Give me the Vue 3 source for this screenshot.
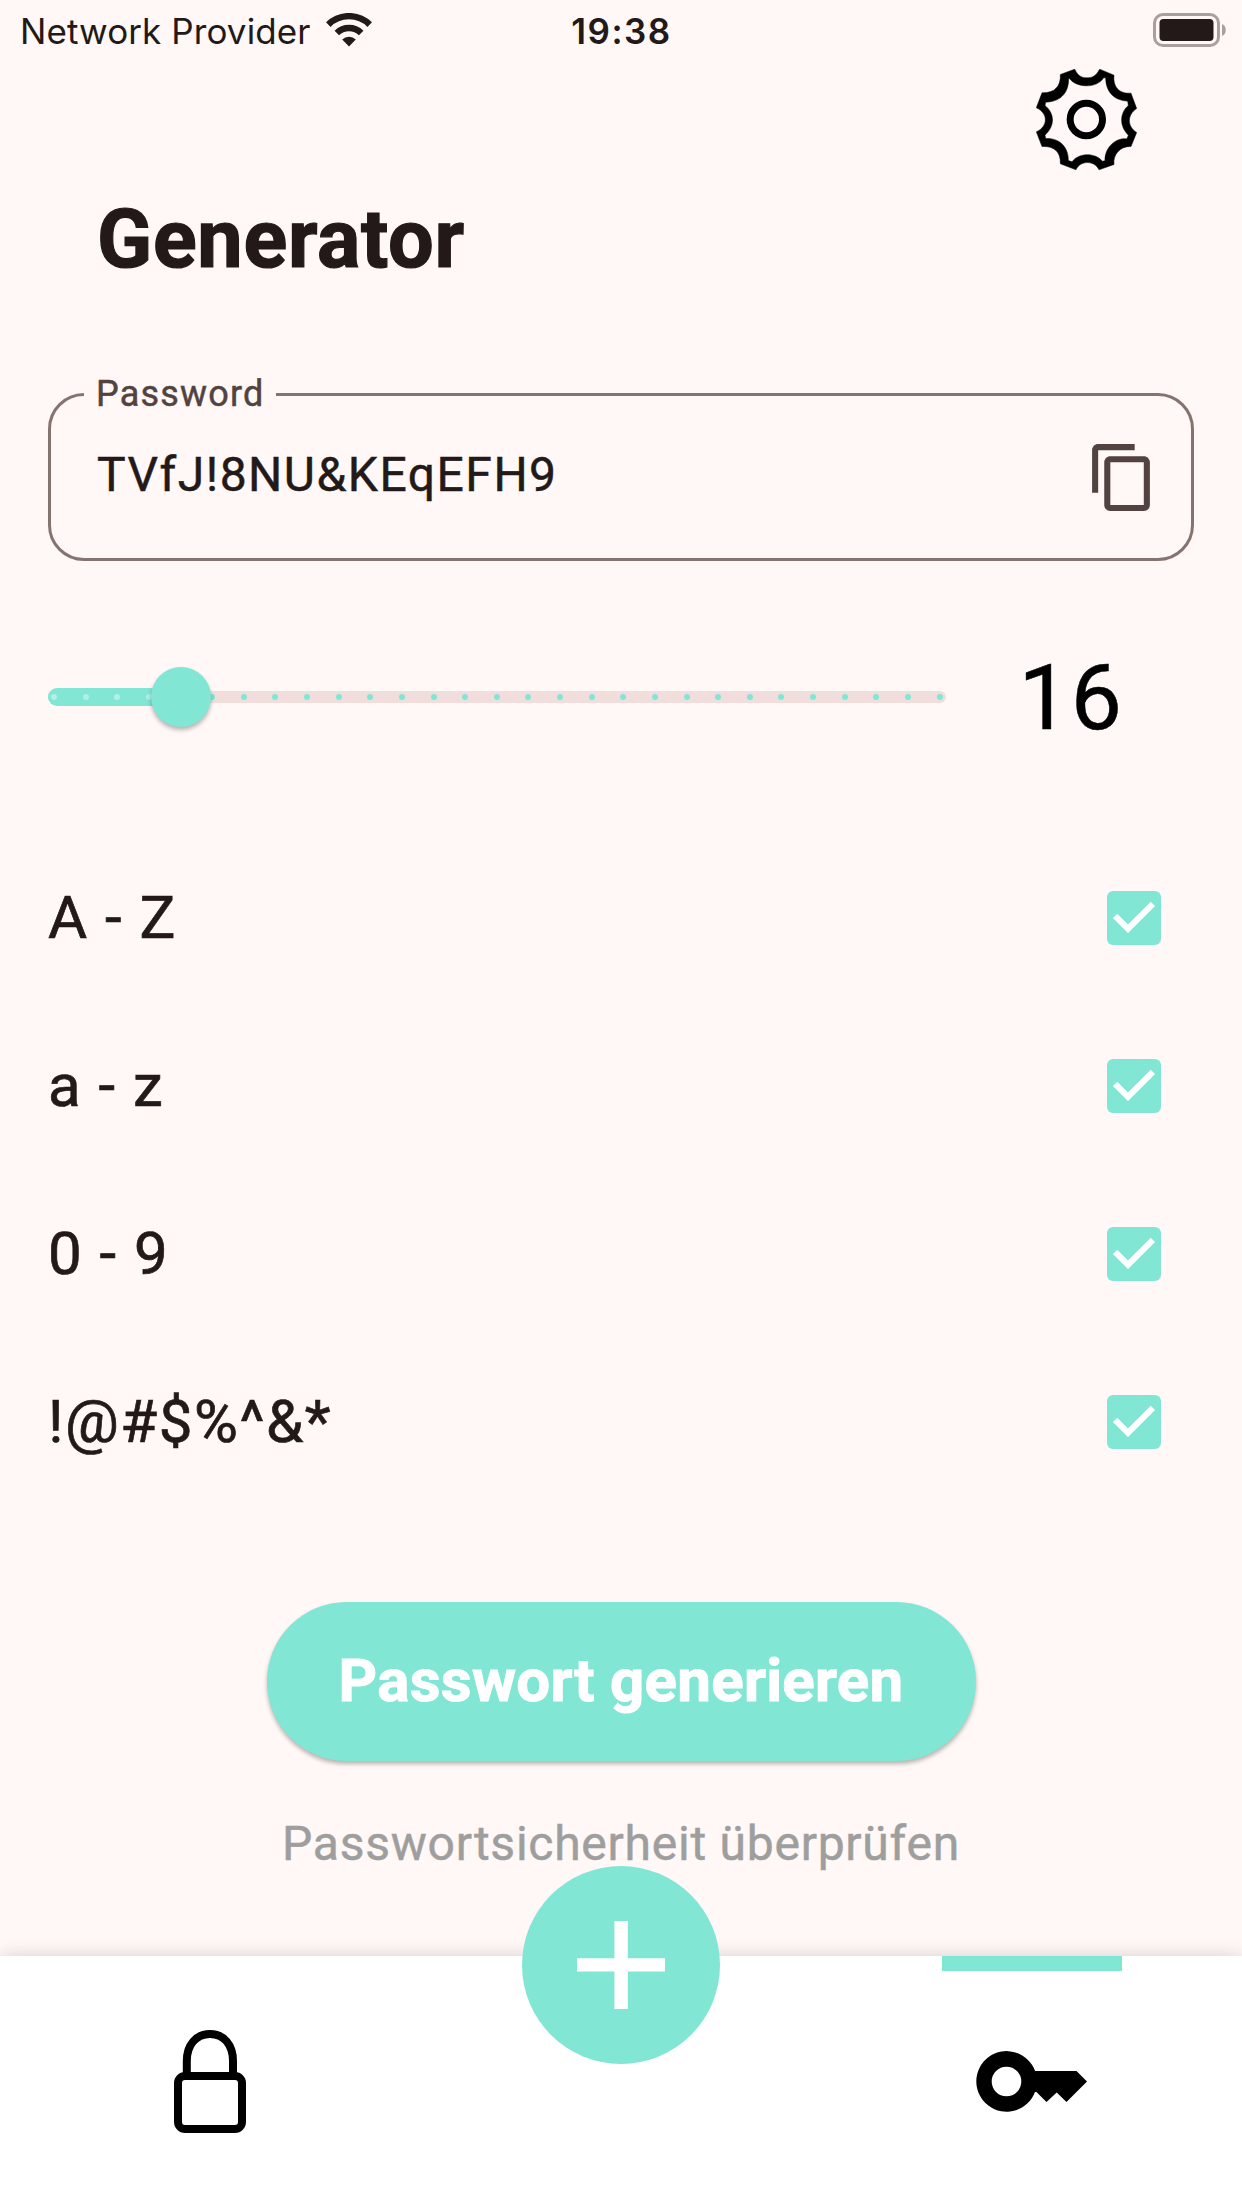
<script setup>
import { ref, computed } from 'vue'

const password = ref('TVfJ!8NU&KEqEFH9')
const minLength = 12
const maxLength = 40
const length = ref(16)

const steps = computed(() =>
  Array.from({ length: maxLength - minLength + 1 }, (_, i) => minLength + i)
)
const thumbX = computed(
  () => 6 + ((length.value - minLength) / (maxLength - minLength)) * 885.5
)

const options = ref([
  { label: 'A - Z', checked: true },
  { label: 'a - z', checked: true },
  { label: '0 - 9', checked: true },
  { label: '!@#$%^&*', checked: true }
])
</script>

<template>
  <div class="screen">
    <header class="status">
      <div class="carrier">
        <span class="carrier-name">Network Provider</span>
        <svg class="wifi" width="46" height="34" viewBox="0 0 46 34">
          <g fill="none" stroke="#231918">
            <path d="M2.3 11.6A29.5 29.5 0 0 1 43.7 11.6" stroke-width="6.4" />
            <path d="M10.8 20A17.4 17.4 0 0 1 35.2 20" stroke-width="6.4" />
          </g>
          <path d="M16.2 26.6A9.6 9.6 0 0 1 29.8 26.6L23 33.4Z" fill="#231918" />
        </svg>
      </div>
      <span class="clock">19:38</span>
      <svg class="battery" width="75" height="34" viewBox="0 0 75 34">
        <rect x="1.5" y="1.5" width="64" height="31" rx="8.5" fill="none" stroke="#a89f9e" stroke-width="3" />
        <rect x="6.5" y="6" width="54" height="22" rx="4" fill="#231918" />
        <path d="M69 11C74 12.5 74 21.5 69 23Z" fill="#a89f9e" />
      </svg>
    </header>

    <div class="toolbar">
      <svg class="gear" width="101" height="101" viewBox="47 27.5 303 303">
        <path
          fill-rule="evenodd"
          stroke="#000"
          stroke-width="1.5"
          d="M120 44L163 28C172 46 182 54 200 54C218 54 228 46 238 28L281 46C277 80 296 103 332 100L349 146C320 165 320 200 349 218L332 260C300 258 277 285 281 314L236 330C222 301 180 301 167 330L120 312C122 275 100 258 65 260L48 216C84 200 84 160 48 144L65 99C102 100 122 80 120 44Z
             M147 56C160 72 180 78 200 78C220 78 240 70 250 54L256 54C256 95 280 122 322 124L324 137C297 160 297 200 324 226L320 237C285 232 252 265 254 303L246 304C225 278 175 278 155 306L144 302C145 262 118 234 76 236L74 226C104 198 104 162 74 137L76 127C115 126 145 105 145 56Z"
        />
        <circle cx="198" cy="179" r="48.5" fill="none" stroke="#000" stroke-width="21" />
      </svg>
    </div>

    <h1 class="title">Generator</h1>

    <div class="field">
      <label class="field-label">Password</label>
      <span class="field-value">{{ password }}</span>
      <svg class="copy" width="73" height="73" viewBox="0 0 24 24" fill="#524341">
        <path d="M16 1H4c-1.1 0-2 .9-2 2v14h2V3h12V1zm3 4H8c-1.1 0-2 .9-2 2v14c0 1.1.9 2 2 2h11c1.1 0 2-.9 2-2V7c0-1.1-.9-2-2-2zm0 16H8V7h11v14z" />
      </svg>
    </div>

    <div class="length-row">
      <div class="slider">
        <div class="track"></div>
        <div class="track-active" :style="{ width: thumbX + 'px' }"></div>
        <div class="ticks">
          <i v-for="s in steps" :key="s" class="tick" :class="{ on: s < length }"></i>
        </div>
        <div class="thumb" :style="{ left: thumbX + 'px' }"></div>
      </div>
      <span class="length">{{ length }}</span>
    </div>

    <ul class="options">
      <li v-for="o in options" :key="o.label" class="option">
        <span>{{ o.label }}</span>
        <svg width="54" height="54" viewBox="3 3 18 18">
          <rect x="3" y="3" width="18" height="18" rx="2" fill="#81e6d3" />
          <path v-if="o.checked" d="M10 17l-5-5 1.41-1.41L10 14.17l7.59-7.59L19 8z" fill="#fff" />
        </svg>
      </li>
    </ul>

    <button class="generate">Passwort generieren</button>
    <a class="check-link">Passwortsicherheit überprüfen</a>

    <nav class="nav">
      <div class="tab lock-tab">
        <svg width="72" height="104" viewBox="0 0 72 104" fill="none" stroke="#000" stroke-width="8">
          <rect x="4" y="46" width="64" height="53" rx="7" />
          <path d="M12.8 46V31C12.8 15 22 4 36 4S59 15 59 31V46" />
        </svg>
      </div>
      <button class="fab">
        <svg width="88" height="88" viewBox="0 0 88 88" fill="#fff">
          <path d="M37.4 0H50.8V37.2H88V50.5H50.8V88H37.4V50.5H0V37.2H37.4Z" />
        </svg>
      </button>
      <div class="tab key-tab">
        <svg class="key" width="111" height="61" viewBox="0 0 111 61">
          <path
            fill-rule="evenodd"
            d="M59.1 20.1H100.5L111 30.4L90.5 51L80.7 41.5L70.5 51L60.4 41H59A30.3 30.3 0 1 1 59.1 20.1ZM45.3 30.5A14.8 14.8 0 1 0 15.700 30.5A14.8 14.8 0 1 0 45.3 30.5Z"
          />
        </svg>
      </div>
    </nav>
  </div>
</template>

<style>
body {
  margin: 0;
  background: #fff8f6;
}
</style>

<style scoped>
.screen {
  display: flex;
  flex-direction: column;
  width: 1242px;
  height: 2208px;
  overflow: hidden;
  background: #fff8f6;
  color: #231918;
  font-family: Roboto, sans-serif;
  -webkit-text-stroke: 0.5px currentColor;
}

.status {
  display: grid;
  grid-template-columns: 1fr auto 1fr;
  height: 62px;
  flex: none;
  line-height: 62px;
  font-family: Inter, sans-serif;
  font-size: 35px;
  -webkit-text-stroke: 0;
}

.carrier {
  display: flex;
  padding-left: 20px;
}

.carrier-name {
  width: 306px;
  letter-spacing: 0.1px;
  white-space: nowrap;
}

.wifi {
  margin-top: 13px;
}

.clock {
  letter-spacing: 1.5px;
  margin-right: -1px;
  font-weight: 600;
}

.battery {
  justify-self: end;
  margin: 13px 14px 0 0;
}

.toolbar {
  display: flex;
  justify-content: flex-end;
  flex: none;
  height: 130px;
  padding: 7px 105px 0 0;
  box-sizing: border-box;
}

.title {
  flex: none;
  margin: 0 0 105px 97px;
  font-size: 81px;
  line-height: 96px;
  font-weight: 700;
  letter-spacing: 0.7px;
  -webkit-text-stroke: 1.2px currentColor;
}

.field {
  position: relative;
  display: flex;
  align-items: center;
  justify-content: space-between;
  flex: none;
  height: 168px;
  margin: 0 48px;
  padding: 0 32px 0 46px;
  box-sizing: border-box;
  border: 3px solid #857370;
  border-radius: 36px;
}

.field-label {
  position: absolute;
  top: -24px;
  left: 33px;
  width: 192px;
  padding-left: 12px;
  box-sizing: border-box;
  background: #fff8f6;
  color: #524341;
  font-size: 36px;
  line-height: 45px;
  letter-spacing: 1.2px;
}

.field-value {
  padding-bottom: 4px;
  font-size: 48px;
  line-height: 72px;
  letter-spacing: 1.5px;
}

.length-row {
  display: flex;
  align-items: center;
  flex: none;
  height: 273px;
  padding-left: 48px;
}

.slider {
  position: relative;
  width: 897.5px;
  height: 60px;
  margin-bottom: 1px;
}

.track,
.track-active {
  position: absolute;
  left: 0;
}

.track {
  top: 24px;
  width: 100%;
  height: 12px;
  border-radius: 6px;
  background: #f1dedc;
}

.track-active {
  top: 21px;
  height: 18px;
  border-radius: 9px 0 0 9px;
  background: #81e6d3;
}

.ticks {
  position: absolute;
  inset: 27px 3px;
  display: flex;
  justify-content: space-between;
}

.tick {
  width: 6px;
  height: 6px;
  border-radius: 50%;
  background: #81e6d3;
}

.tick.on {
  background: #b1f0e4;
}

.thumb {
  position: absolute;
  top: 0;
  width: 60px;
  height: 60px;
  margin-left: -30px;
  border-radius: 50%;
  background: #81e6d3;
  box-shadow: 0 3px 4px rgba(0, 0, 0, 0.28);
}

.length {
  margin-left: 73px;
  color: #000;
  font-size: 91px;
  line-height: 100px;
  letter-spacing: 1px;
}

.options {
  flex: none;
  margin: 0 0 96px;
  padding: 0 81px 0 48px;
  list-style: none;
}

.option {
  display: flex;
  align-items: center;
  justify-content: space-between;
  height: 168px;
  font-size: 60px;
  line-height: 84px;
  letter-spacing: 1.5px;
  -webkit-text-stroke: 0.7px currentColor;
}

.generate {
  flex: none;
  align-self: center;
  width: 709px;
  height: 159px;
  padding: 0 0 2px;
  border: 0;
  border-radius: 80px;
  background: #81e6d3;
  box-shadow: 0 3px 4px rgba(0, 0, 0, 0.28);
  color: #fff;
  font-family: inherit;
  font-size: 60px;
  font-weight: 700;
  letter-spacing: 0.3px;
  white-space: nowrap;
  -webkit-text-stroke: 1px currentColor;
}

.check-link {
  flex: none;
  align-self: center;
  margin-top: 53px;
  color: #9e9e9e;
  font-size: 48px;
  line-height: 60px;
  letter-spacing: 0.75px;
}

.nav {
  display: flex;
  justify-content: space-between;
  flex: none;
  height: 252px;
  margin-top: auto;
  background: #fff;
  box-shadow: 0 0 18px rgba(0, 0, 0, 0.16);
}

.tab {
  box-sizing: border-box;
  width: 180px;
}

.lock-tab {
  margin-left: 120px;
  padding: 74px 0 0 54px;
}

.fab {
  display: flex;
  align-items: center;
  justify-content: center;
  width: 198px;
  height: 198px;
  margin-top: -90px;
  padding: 0;
  border: 0;
  border-radius: 50%;
  background: #81e6d3;
}

.key-tab {
  margin-right: 120px;
  padding: 80px 0 0 34px;
  border-top: 15px solid #81e6d3;
}

.key {
  overflow: visible;
}
</style>
